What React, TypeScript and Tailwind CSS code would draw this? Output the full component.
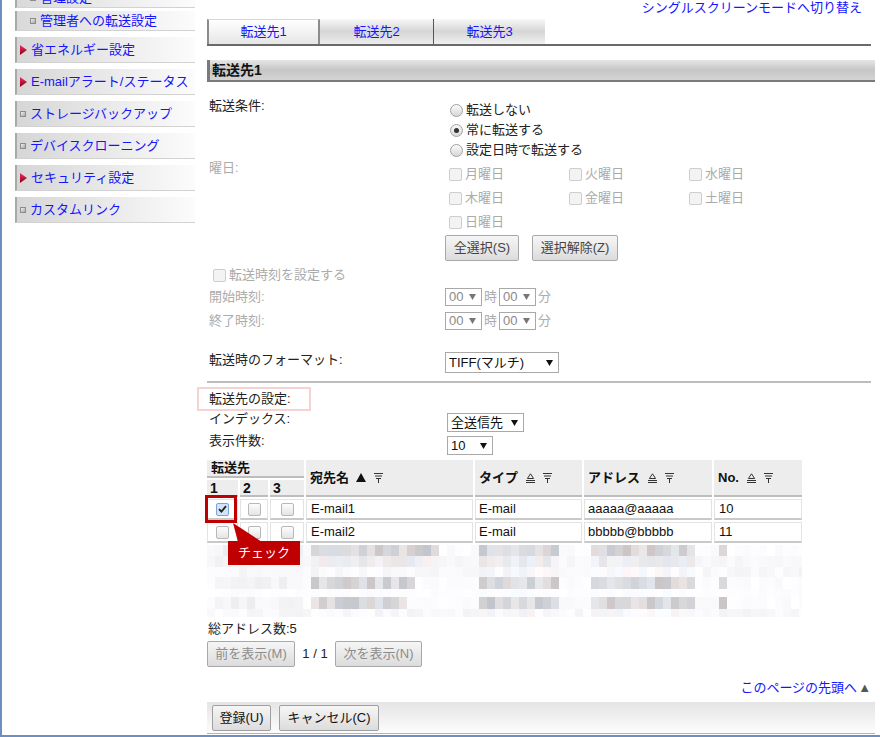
import React from 'react';

const LINK = 'text-[#1414ff]';

function Bullet() {
  return (
    <span className="inline-block h-[6px] w-[6px] shrink-0 border border-[#8c8c8c] bg-gradient-to-br from-[#f2f2f2] to-[#a6a6a6]" />
  );
}

function RedArrow() {
  return (
    <svg width="7" height="10" viewBox="0 0 7 10" className="shrink-0">
      <defs>
        <linearGradient id="ra" x1="0" y1="0" x2="0" y2="1">
          <stop offset="0" stopColor="#f2305c" />
          <stop offset="1" stopColor="#8a0018" />
        </linearGradient>
      </defs>
      <polygon points="0,0 7,5 0,10" fill="url(#ra)" />
    </svg>
  );
}

const SIDE = [
  { label: '省エネルギー設定', arrow: true },
  { label: 'E-mailアラート/ステータス', arrow: true },
  { label: 'ストレージバックアップ', arrow: false },
  { label: 'デバイスクローニング', arrow: false },
  { label: 'セキュリティ設定', arrow: true },
  { label: 'カスタムリンク', arrow: false },
];

function SubItem({ label, className = '' }: { label: string; className?: string }) {
  return (
    <div
      className={`flex h-[20px] w-[180px] items-center border-b border-l-2 border-b-[#d2d2d2] border-l-[#a9a9a9] bg-gradient-to-r from-[#d9d9d9] to-[#fcfcfc] pl-[13px] ${className}`}
    >
      <Bullet />
      <span className={`ml-[4px] whitespace-nowrap text-[13px] leading-[16px] ${LINK}`}>{label}</span>
    </div>
  );
}

function Sidebar() {
  return (
    <div className="flex w-[205px] shrink-0 flex-col pl-[13px]">
      <SubItem label="管理設定" className="mt-[-12px]" />
      <SubItem label="管理者への転送設定" className="mt-[3px]" />
      {SIDE.map((s) => (
        <div
          key={s.label}
          className="mt-[6px] flex h-[26px] w-[180px] items-center border-b border-l-2 border-b-[#d2d2d2] border-l-[#a9a9a9] bg-gradient-to-r from-[#d6d6d6] to-[#fcfcfc] pl-[3px]"
        >
          {s.arrow ? <RedArrow /> : <Bullet />}
          <span className={`ml-[4px] whitespace-nowrap text-[13px] leading-[16px] ${LINK}`}>{s.label}</span>
        </div>
      ))}
    </div>
  );
}

function Radio({ checked }: { checked?: boolean }) {
  return (
    <span className="flex h-[13px] w-[13px] shrink-0 items-center justify-center rounded-full border border-[#a2a2a2] bg-gradient-to-b from-[#fafafa] to-[#d8d8d8]">
      {checked && <span className="h-[5px] w-[5px] rounded-full bg-[#333]" />}
    </span>
  );
}

function Check({ checked, disabled }: { checked?: boolean; disabled?: boolean }) {
  if (checked) {
    return (
      <span className="flex h-[13px] w-[13px] shrink-0 items-center justify-center rounded-[2px] border border-[#7aa3d8] bg-[#d3e4f8]">
        <svg width="9" height="8" viewBox="0 0 9 8">
          <path d="M1 4.2 L3.4 6.6 L8 1.2" fill="none" stroke="#222" strokeWidth="1.8" />
        </svg>
      </span>
    );
  }
  return (
    <span
      className={`inline-block h-[13px] w-[13px] shrink-0 rounded-[2px] border ${
        disabled ? 'border-[#cdcdcd] bg-[#f3f3f3]' : 'border-[#b8b8b8] bg-gradient-to-b from-[#fdfdfd] to-[#e4e4e4]'
      }`}
    />
  );
}

function Arrow({ gray }: { gray?: boolean }) {
  return (
    <svg width="7" height="6" viewBox="0 0 7 6" className="shrink-0">
      <polygon points="0,0 7,0 3.5,6" fill={gray ? '#777' : '#111'} />
    </svg>
  );
}

function Select({ text, w, h, gray }: { text: string; w: string; h: string; gray?: boolean }) {
  return (
    <div
      className={`flex ${w} ${h} items-center justify-between border border-[#a9a9a9] bg-white pl-[3px] pr-[5px] text-[13px] leading-[16px] ${
        gray ? 'text-[#8a8a8a]' : 'text-[#111]'
      }`}
    >
      <span className="whitespace-nowrap">{text}</span>
      <Arrow gray={gray} />
    </div>
  );
}

function Btn({ children, w, muted }: { children: React.ReactNode; w: string; muted?: boolean }) {
  return (
    <div
      className={`flex h-[26px] ${w} shrink-0 items-center justify-center rounded-[2px] border border-[#a8a8a8] bg-gradient-to-b from-[#f6f6f6] to-[#dcdcdc] text-[13px] leading-[16px] ${
        muted ? 'text-[#8c8c8c]' : 'text-[#444]'
      }`}
    >
      {children}
    </div>
  );
}

function SortIcon({ active }: { active?: boolean }) {
  if (active) {
    return (
      <svg width="10" height="9" viewBox="0 0 10 9" className="ml-[7px] shrink-0">
        <polygon points="5,0 10,9 0,9" fill="#111" />
      </svg>
    );
  }
  return (
    <svg width="9" height="10" viewBox="0 0 9 10" className="ml-[8px] shrink-0">
      <polygon points="4.5,0.8 7.6,5.5 1.4,5.5" fill="none" stroke="#333" strokeWidth="1" />
      <rect x="0" y="7" width="9" height="1" fill="#333" />
      <rect x="0" y="9" width="9" height="1" fill="#333" />
    </svg>
  );
}

function FilterIcon() {
  return (
    <svg width="9" height="10" viewBox="0 0 9 10" className="ml-[8px] shrink-0">
      <rect x="0" y="0" width="9" height="1" fill="#333" />
      <rect x="1" y="2.5" width="7" height="1" fill="#333" />
      <rect x="2" y="5" width="5" height="1" fill="#333" />
      <rect x="4" y="6" width="1" height="4" fill="#333" />
    </svg>
  );
}

const HEAD_CELL = 'border-b-2 border-[#bdbdbd] bg-[#ededed] text-[13px] font-bold text-[#111]';
const DATA_CELL =
  'flex items-center border border-[#e3e3e3] border-b-2 border-b-[#c9c9c9] bg-white text-[13px] leading-[16px] text-[#111]';

const ROWS = [
  { name: 'E-mail1', type: 'E-mail', addr: 'aaaaa@aaaaa', no: '10', checked: true },
  { name: 'E-mail2', type: 'E-mail', addr: 'bbbbb@bbbbb', no: '11', checked: false },
];

type MKind = 'dark' | 'light' | 'faint' | 'blank';
const MOSAIC: { h: number; kind: MKind; nameEnd: number }[] = [
  { h: 11, kind: 'dark', nameEnd: 228 },
  { h: 11, kind: 'light', nameEnd: 218 },
  { h: 10, kind: 'faint', nameEnd: 0 },
  { h: 12, kind: 'dark', nameEnd: 208 },
  { h: 8, kind: 'blank', nameEnd: 0 },
  { h: 12, kind: 'dark', nameEnd: 198 },
  { h: 8, kind: 'faint', nameEnd: 0 },
];

function rnd(r: number, c: number) {
  const v = Math.sin(r * 127.1 + c * 311.7) * 43758.5453;
  return v - Math.floor(v);
}

function clamp(v: number) {
  return Math.max(0, Math.min(255, Math.round(v)));
}

function blockColor(row: number, c: number) {
  const { kind, nameEnd } = MOSAIC[row];
  const x = c * 8;
  const n = rnd(row, c);
  const t = rnd(row + 11, c + 7);
  const inText =
    (x >= 97 && x < nameEnd) || (x >= 269 && x < 349) || (x >= 378 && x < 482) || (kind === 'dark' && x >= 508 && x < 518);
  const inChk = x >= 3 && x < 95;
  let g = 252;
  if (kind === 'dark') g = inText ? 198 + n * 34 : inChk ? 236 + n * 14 : 249 + n * 6;
  else if (kind === 'light') g = inText ? 230 + n * 16 : inChk ? 240 + n * 10 : 245 + n * 7;
  else if (kind === 'faint') g = 243 + n * 11;
  else g = 251 + n * 4;
  const tint = inText ? (t - 0.5) * 12 : 0;
  return `rgb(${clamp(g + tint)},${clamp(g - Math.abs(tint) / 3)},${clamp(g - tint / 2 + 2)})`;
}

function Mosaic() {
  return (
    <div className="mt-[2px] w-[595px] overflow-hidden">
      {MOSAIC.map((r, i) => (
        <div key={i} className="flex" style={{ height: r.h }}>
          {Array.from({ length: 75 }, (_, c) => (
            <div key={c} className="h-full w-[8px] shrink-0" style={{ background: blockColor(i, c) }} />
          ))}
        </div>
      ))}
    </div>
  );
}

function AddressTable() {
  return (
    <div className="relative mt-[5px]">
      <div className="grid grid-cols-[31px_28px_34px_167px_107px_128px_88px] grid-rows-[18px_17px_21px_21px] gap-[2px]">
        <div className={`col-span-3 flex items-center pl-[4px] leading-[16px] ${HEAD_CELL}`}>転送先</div>
        <div className={`row-span-2 flex items-center pl-[4px] leading-[16px] ${HEAD_CELL}`}>
          宛先名
          <SortIcon active />
          <FilterIcon />
        </div>
        <div className={`row-span-2 flex items-center pl-[4px] leading-[16px] ${HEAD_CELL}`}>
          タイプ
          <SortIcon />
          <FilterIcon />
        </div>
        <div className={`row-span-2 flex items-center pl-[4px] leading-[16px] ${HEAD_CELL}`}>
          アドレス
          <SortIcon />
          <FilterIcon />
        </div>
        <div className={`row-span-2 flex items-center pl-[4px] leading-[16px] ${HEAD_CELL}`}>
          No.
          <SortIcon />
          <FilterIcon />
        </div>
        {['1', '2', '3'].map((n) => (
          <div key={n} className={`flex items-center pl-[3px] text-[14px] leading-[16px] ${HEAD_CELL}`}>
            {n}
          </div>
        ))}
        {ROWS.map((r) => (
          <React.Fragment key={r.name}>
            <div className={`${DATA_CELL} justify-center`}>
              <Check checked={r.checked} />
            </div>
            <div className={`${DATA_CELL} justify-center`}>
              <Check />
            </div>
            <div className={`${DATA_CELL} justify-center`}>
              <Check />
            </div>
            <div className={`${DATA_CELL} pl-[4px]`}>{r.name}</div>
            <div className={`${DATA_CELL} pl-[3px]`}>{r.type}</div>
            <div className={`${DATA_CELL} pl-[3px]`}>{r.addr}</div>
            <div className={`${DATA_CELL} pl-[4px]`}>{r.no}</div>
          </React.Fragment>
        ))}
      </div>
      <Mosaic />

      {/* annotation overlay */}
      <div className="absolute left-[-2px] top-[35px] h-[28px] w-[32px] border-[3px] border-[#c00000]" />
      <svg width="36" height="20" viewBox="0 0 36 20" className="absolute left-[21px] top-[63px]">
        <polygon points="5,0 10,19 34,19" fill="#c00000" />
      </svg>
      <div className="absolute left-[21px] top-[81px] flex h-[24px] w-[72px] items-center justify-center bg-[#c00000] text-[13px] leading-[16px] text-white">
        チェック
      </div>
    </div>
  );
}

const DAYS = ['月曜日', '火曜日', '水曜日', '木曜日', '金曜日', '土曜日', '日曜日'];

function Main() {
  return (
    <div className="flex w-[668px] shrink-0 flex-col text-[13px] leading-[16px] text-[#222]">
      <div className={`h-[19px] pr-[13px] text-right ${LINK}`}>シングルスクリーンモードへ切り替え</div>

      <div className="flex h-[27px] w-[664px] border-b-2 border-[#6a6a6a]">
        <div className={`flex w-[113px] items-center justify-center border-x-2 border-t border-x-[#8c8c8c] border-t-[#d8d8d8] bg-gradient-to-b from-white to-[#e6e6e6] ${LINK}`}>
          転送先1
        </div>
        <div className={`flex w-[114px] items-center justify-center border-r border-[#555] bg-gradient-to-b from-[#f8f8f8] via-[#d6d6d6] to-[#ececec] ${LINK}`}>
          転送先2
        </div>
        <div className={`flex w-[111px] items-center justify-center bg-gradient-to-b from-[#f8f8f8] via-[#d6d6d6] to-[#f0f0f0] ${LINK}`}>
          転送先3
        </div>
      </div>

      <div className="mt-[14px] flex h-[22px] items-center border-b-2 border-l-[3px] border-[#7a7a7a] bg-gradient-to-b from-[#e6e6e6] via-[#c6c6c6] to-[#d4d4d4] pl-[2px] text-[14px] font-bold leading-[18px] text-[#111]">
        転送先1
      </div>

      {/* 転送条件 */}
      <div className="mt-[16px] flex">
        <div className="w-[238px] shrink-0 pl-[2px]">転送条件:</div>
        <div className="flex flex-col pt-[2px]">
          {[
            ['転送しない', false],
            ['常に転送する', true],
            ['設定日時で転送する', false],
          ].map(([label, on]) => (
            <div key={label as string} className="flex h-[20px] items-center pl-[5px]">
              <Radio checked={on as boolean} />
              <span className="ml-[3px]">{label}</span>
            </div>
          ))}
        </div>
      </div>

      {/* 曜日 */}
      <div className="flex">
        <div className="w-[238px] shrink-0 pl-[2px] text-[#ababab]">曜日:</div>
        <div className="flex flex-col pt-[2px]">
          <div className="grid grid-cols-[120px_120px_120px] grid-rows-[24px_24px_24px] pl-[4px]">
            {DAYS.map((d) => (
              <div key={d} className="flex items-center">
                <Check disabled />
                <span className="ml-[3px] text-[#ababab]">{d}</span>
              </div>
            ))}
          </div>
          <div className="mt-[1px] flex gap-[13px]">
            <Btn w="w-[74px]">全選択(S)</Btn>
            <Btn w="w-[86px]">選択解除(Z)</Btn>
          </div>
        </div>
      </div>

      <div className="mt-[6px] flex h-[16px] items-center pl-[6px] text-[#ababab]">
        <Check disabled />
        <span className="ml-[3px]">転送時刻を設定する</span>
      </div>

      {['開始時刻:', '終了時刻:'].map((l) => (
        <div key={l} className="mt-[4px] flex h-[20px] items-center">
          <div className="w-[238px] shrink-0 pl-[2px] leading-[20px] text-[#ababab]">{l}</div>
          <Select text="00" w="w-[37px]" h="h-[18px]" gray />
          <span className="mx-[2px] text-[#ababab]">時</span>
          <Select text="00" w="w-[37px]" h="h-[18px]" gray />
          <span className="ml-[2px] text-[#ababab]">分</span>
        </div>
      ))}

      <div className="mt-[21px] flex">
        <div className="w-[238px] shrink-0 pl-[2px]">転送時のフォーマット:</div>
        <Select text="TIFF(マルチ)" w="w-[114px]" h="h-[21px]" />
      </div>

      <div className="mt-[8px] h-[2px] w-[664px] bg-[#bdbdbd]" />

      <div className="ml-[-10px] mt-[4px] flex h-[24px] w-[114px] items-center border-2 border-[#f6d3d3] pl-[10px]">
        転送先の設定:
      </div>

      <div className="flex">
        <div className="w-[240px] shrink-0 pl-[2px]">インデックス:</div>
        <div className="mt-[2px]">
          <Select text="全送信先" w="w-[77px]" h="h-[19px]" />
        </div>
      </div>
      <div className="mt-[1px] flex">
        <div className="w-[240px] shrink-0 pl-[2px]">表示件数:</div>
        <div className="mt-[3px]">
          <Select text="10" w="w-[46px]" h="h-[19px]" />
        </div>
      </div>

      <AddressTable />

      <div className="mt-[4px] pl-[1px]">総アドレス数:5</div>
      <div className="mt-[4px] flex items-center">
        <Btn w="w-[88px]" muted>
          前を表示(M)
        </Btn>
        <span className="mx-[5px] w-[30px] text-center">1 / 1</span>
        <Btn w="w-[87px]" muted>
          次を表示(N)
        </Btn>
      </div>

      <div className="mt-[13px] flex justify-end pr-[4px]">
        <span className={LINK}>このページの先頭へ</span>
        <span className="ml-[1px] text-[#555]">▲</span>
      </div>

      <div className="mt-[6px] flex h-[32px] items-center gap-[8px] border-b border-[#b4b4b4] bg-gradient-to-b from-[#e4e4e4] to-[#fdfdfd] pl-[5px]">
        <div className="flex h-[26px] w-[59px] items-center justify-center rounded-[2px] border border-[#a0a0a0] bg-gradient-to-b from-[#f6f6f6] to-[#dcdcdc] text-[#111]">
          登録(U)
        </div>
        <div className="flex h-[26px] w-[100px] items-center justify-center rounded-[2px] border border-[#a0a0a0] bg-gradient-to-b from-[#f6f6f6] to-[#dcdcdc] text-[#111]">
          キャンセル(C)
        </div>
      </div>
    </div>
  );
}

export default function App() {
  return (
    <div className="flex h-[737px] w-[880px] overflow-hidden border-b-2 border-l-2 border-[#6b8fc0] bg-white font-['Liberation_Sans','Noto_Sans_CJK_JP',sans-serif]">
      <Sidebar />
      <Main />
    </div>
  );
}
